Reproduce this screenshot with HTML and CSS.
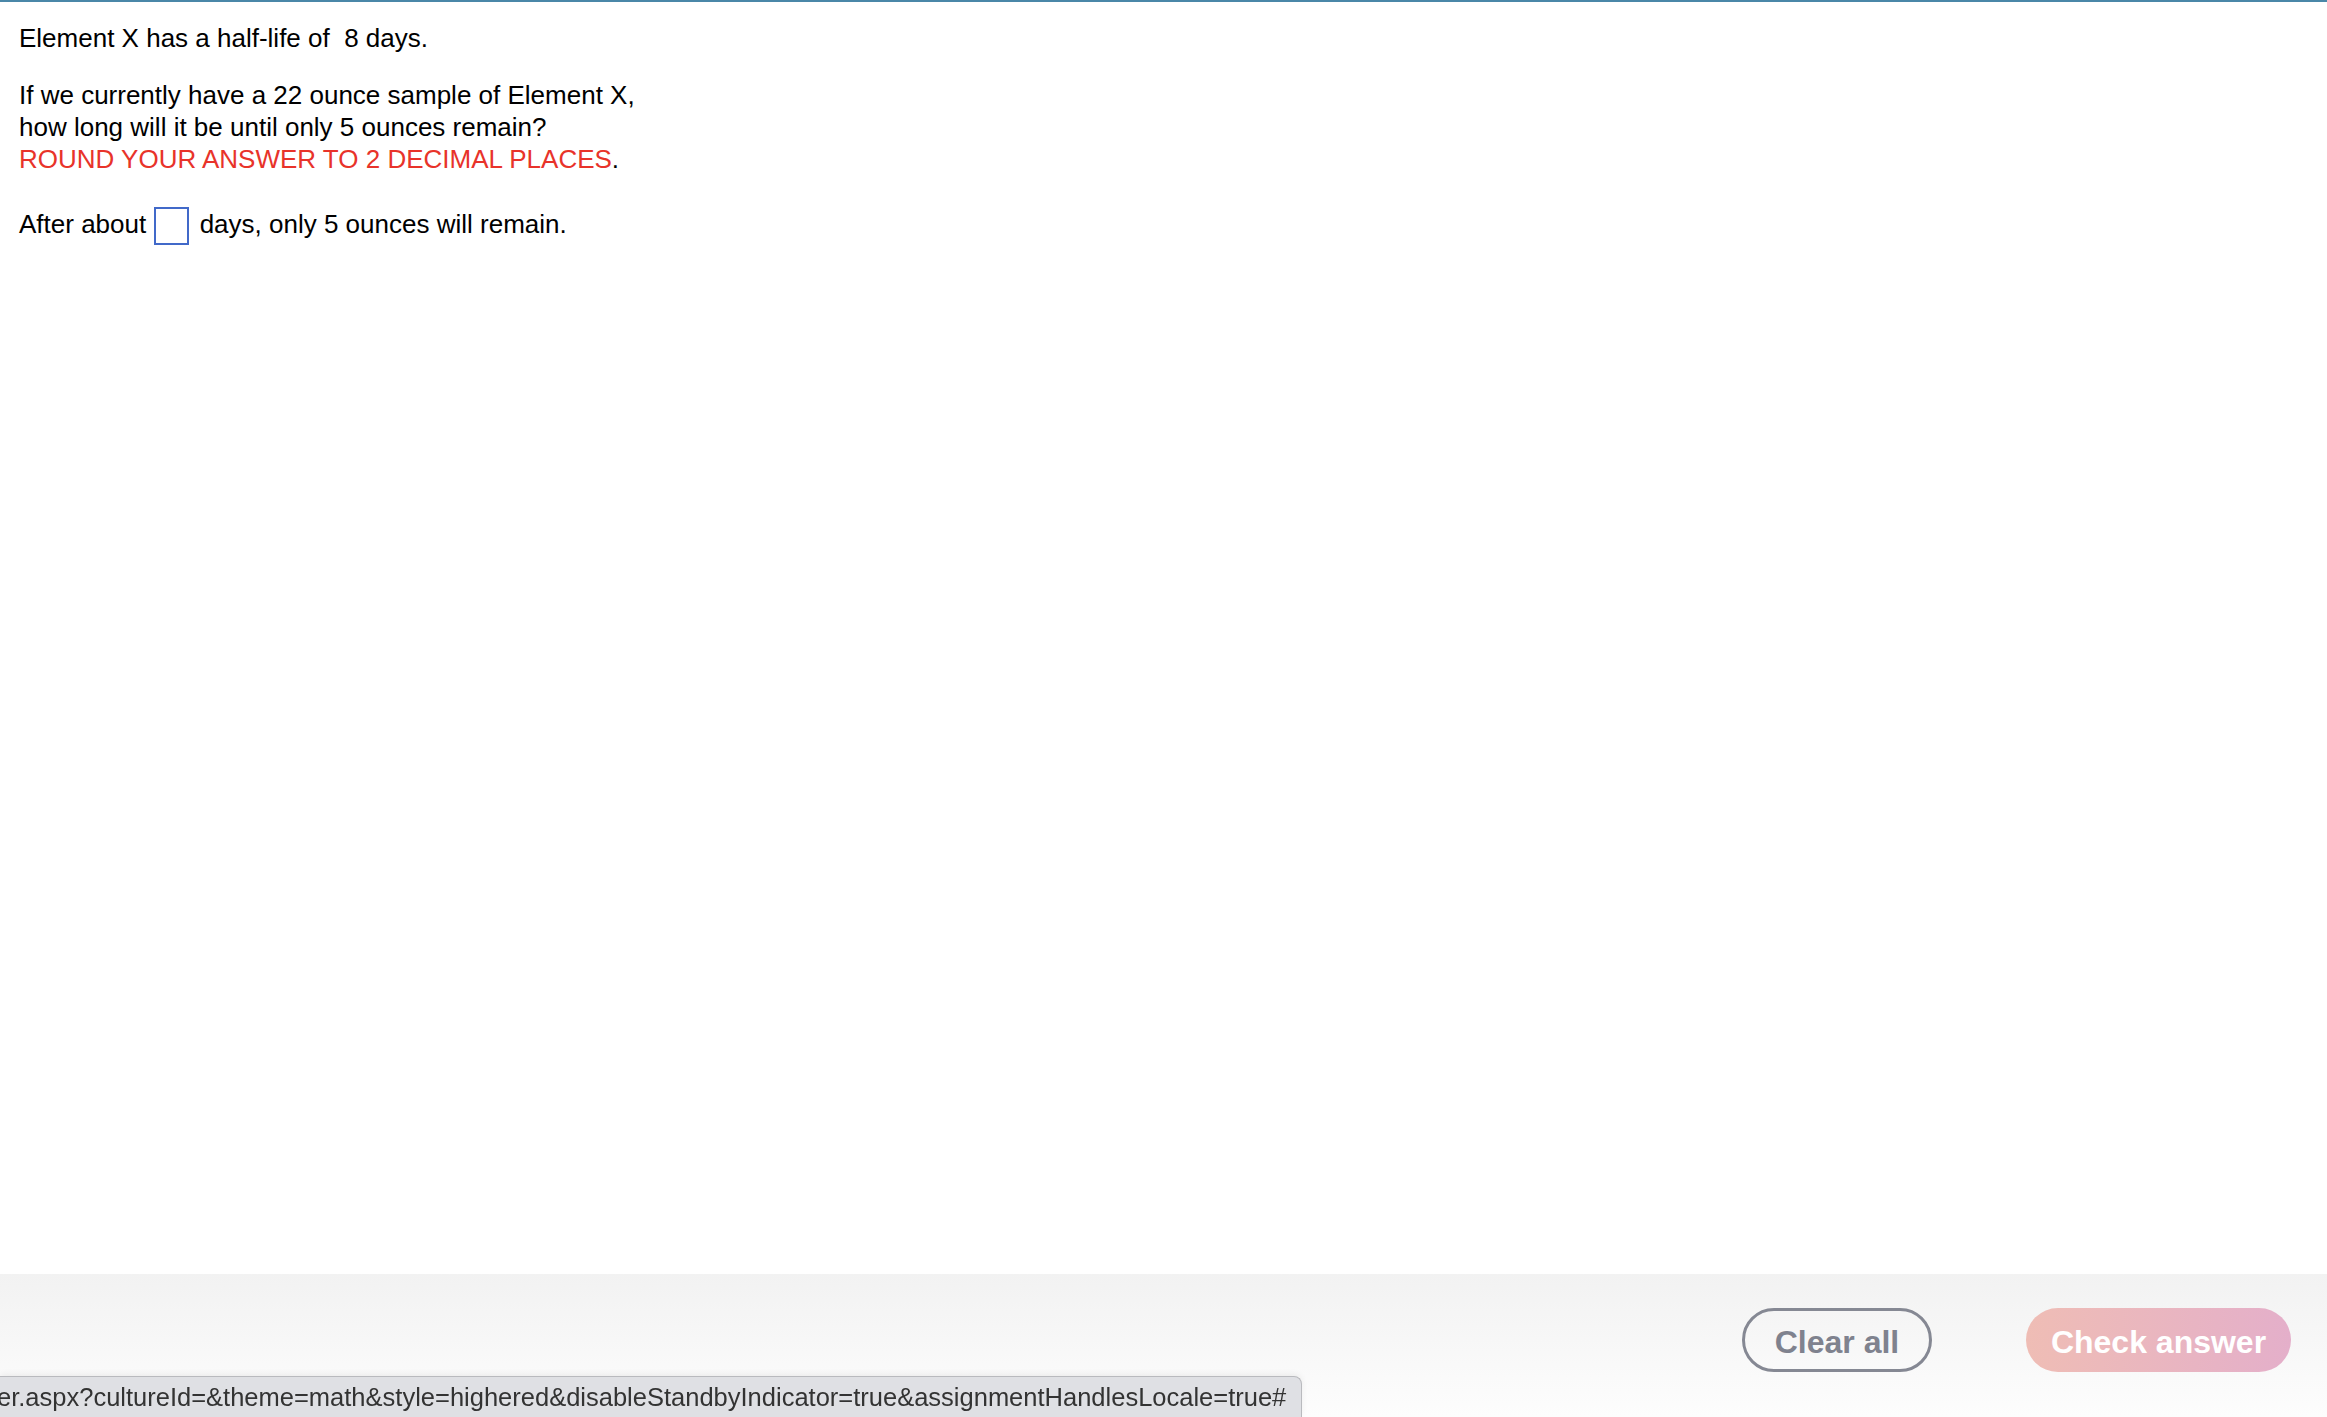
FILE: index.html
```html
<!DOCTYPE html>
<html lang="en">
<head>
    <meta charset="UTF-8">
    <meta name="viewport" content="width=device-width, initial-scale=1.0">
    <title>Question</title>
    <link rel="stylesheet" href="styles.css">
</head>
<body>

<div class="question">
    <p class="first">Element X has a half-life of &nbsp;8 days.</p>

    <p class="second">If we currently have a 22 ounce sample of Element X,<br>
    how long will it be until only 5 ounces remain?<br>
    <span class="red">ROUND YOUR ANSWER TO 2 DECIMAL PLACES</span>.</p>

    <p class="third">After about <span class="answer-box"></span> days, only 5 ounces will remain.</p>
</div>

<div class="footer">
    <button class="clear-btn">Clear all</button>
    <button class="check-btn">Check answer</button>
</div>

<!-- barra de estado del navegador -->
<div class="statusbar"><span>er.aspx?cultureId=&amp;theme=math&amp;style=highered&amp;disableStandbyIndicator=true&amp;assignmentHandlesLocale=true#</span></div>

</body>
</html>
```

FILE: styles.css
```css
        html, body {
            height: 100%;
        }
        body {
            margin: 0;
            padding: 0;
            font-family: "Liberation Sans", Arial, sans-serif;
            background-color: #ffffff;
            color: #000000;
            border-top: 2px solid #4a87a8; /* linea superior */
            box-sizing: border-box;
            display: flex;
            flex-direction: column;
            overflow: hidden;
        }
        .question {
            flex: 1;
            padding: 20px 19px 0 19px;
            font-size: 26px;
            line-height: 32px;
        }
        .question p {
            margin: 0;
        }
        .second {
            margin-top: 25px !important;
        }
        .third {
            margin-top: 32px !important;
        }
        .red {
            color: #e8332a;
        }
        .answer-box {
            display: inline-block;
            width: 31px;
            height: 34px;
            border: 2px solid #4169c9;
            vertical-align: -12px;
            margin: 0 3px 0 1px;
        }
        .footer {
            height: 143px;
            background: linear-gradient(to bottom, #f2f2f2, #fdfdfd);
            display: flex;
            justify-content: flex-end;
            align-items: flex-start;
            padding: 34px 36px 0 0;
            box-sizing: border-box;
            gap: 94px;
        }
        button {
            font-family: "Liberation Sans", Arial, sans-serif;
            font-weight: bold;
            font-size: 32px;
            height: 64px;
            border-radius: 32px;
            padding-top: 6px;
            cursor: pointer;
        }
        .clear-btn {
            width: 190px;
            background: transparent;
            border: 3px solid #858893;
            color: #7f828e;
        }
        .check-btn {
            width: 265px;
            border: none;
            color: #ffffff;
            background: linear-gradient(to right, #efbdb5, #e4afca);
        }
        .statusbar {
            position: fixed;
            left: 0;
            bottom: 0;
            height: 41px;
            width: 1302px;
            box-sizing: border-box;
            background-color: #dfe0e4;
            border-top: 1px solid #b9babe;
            border-right: 1px solid #b9babe;
            border-top-right-radius: 8px;
            box-shadow: 0 -2px 6px rgba(0, 0, 0, 0.06);
            font-size: 25.5px;
            line-height: 40px;
            color: #333333;
            white-space: nowrap;
            overflow: hidden;
        }
        .statusbar span {
            margin-left: -3px;
        }
```
